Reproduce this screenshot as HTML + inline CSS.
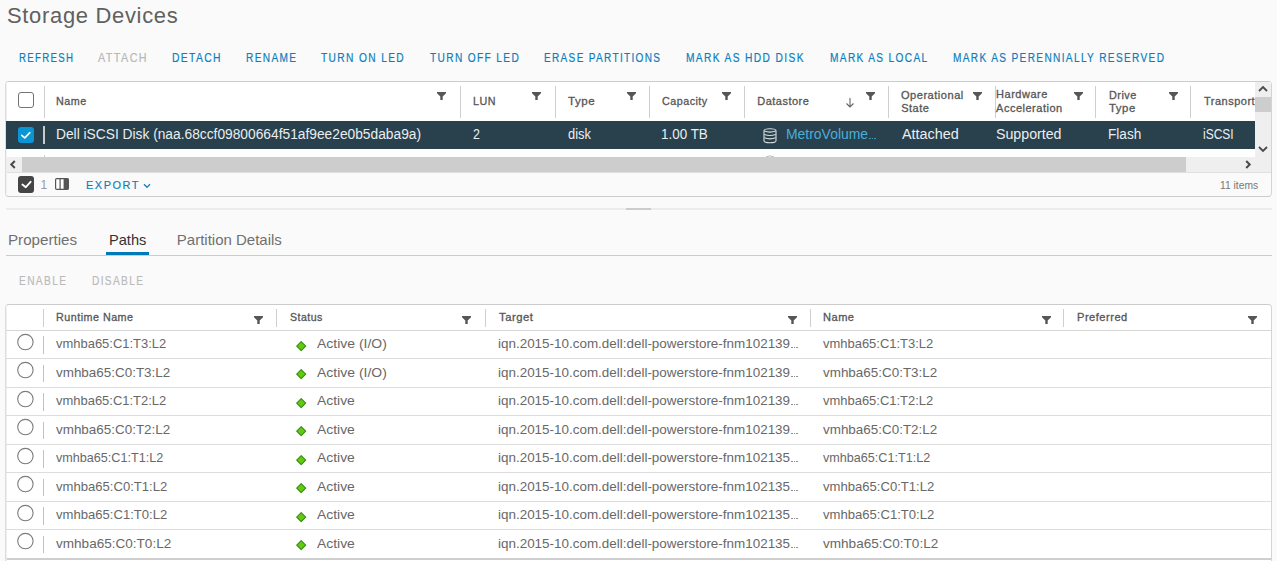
<!DOCTYPE html>
<html><head><meta charset="utf-8">
<style>
*{box-sizing:border-box;margin:0;padding:0}
html,body{width:1277px;height:561px;overflow:hidden;background:#fafafa;font-family:"Liberation Sans",sans-serif}
.a{position:absolute}
.t{position:absolute;white-space:nowrap;transform-origin:0 0;font-family:"Liberation Sans",sans-serif}
.clip{position:absolute;overflow:hidden}
svg{position:absolute;overflow:visible}
</style></head><body>
<div class="a" style="left:5px;top:81px;width:1267px;height:116px;border:1px solid #cccccc;border-left-color:#dcdcdc;border-right-color:#d4d4d4;border-radius:4px;background:#fafafa"></div>
<div class="a" style="left:6px;top:85px;width:1px;height:108px;background:#f0f0f0"></div>
<div class="a" style="left:7px;top:82px;width:1248px;height:39px;background:#fff"></div>
<div class="a" style="left:18px;top:92px;width:16px;height:16px;border:1.5px solid #737373;border-radius:3px;background:#fff"></div>
<div class="a" style="left:44px;top:86px;width:1px;height:32px;background:#cfcfcf"></div>
<div class="a" style="left:460px;top:86px;width:1px;height:32px;background:#cfcfcf"></div>
<div class="a" style="left:555px;top:86px;width:1px;height:32px;background:#cfcfcf"></div>
<div class="a" style="left:649px;top:86px;width:1px;height:32px;background:#cfcfcf"></div>
<div class="a" style="left:744px;top:86px;width:1px;height:32px;background:#cfcfcf"></div>
<div class="a" style="left:888px;top:86px;width:1px;height:32px;background:#cfcfcf"></div>
<div class="a" style="left:995px;top:86px;width:1px;height:32px;background:#cfcfcf"></div>
<div class="a" style="left:1095px;top:86px;width:1px;height:32px;background:#cfcfcf"></div>
<div class="a" style="left:1190px;top:86px;width:1px;height:32px;background:#cfcfcf"></div>
<svg style="left:437px;top:92px" width="9" height="8" viewBox="0 0 9 8"><path d="M0 0H9V1.3L5.7 4.4V8H3.3V4.4L0 1.3Z" fill="#565656"/></svg>
<svg style="left:532px;top:92px" width="9" height="8" viewBox="0 0 9 8"><path d="M0 0H9V1.3L5.7 4.4V8H3.3V4.4L0 1.3Z" fill="#565656"/></svg>
<svg style="left:627px;top:92px" width="9" height="8" viewBox="0 0 9 8"><path d="M0 0H9V1.3L5.7 4.4V8H3.3V4.4L0 1.3Z" fill="#565656"/></svg>
<svg style="left:722px;top:92px" width="9" height="8" viewBox="0 0 9 8"><path d="M0 0H9V1.3L5.7 4.4V8H3.3V4.4L0 1.3Z" fill="#565656"/></svg>
<svg style="left:866px;top:92px" width="9" height="8" viewBox="0 0 9 8"><path d="M0 0H9V1.3L5.7 4.4V8H3.3V4.4L0 1.3Z" fill="#565656"/></svg>
<svg style="left:973px;top:92px" width="9" height="8" viewBox="0 0 9 8"><path d="M0 0H9V1.3L5.7 4.4V8H3.3V4.4L0 1.3Z" fill="#565656"/></svg>
<svg style="left:1074px;top:92px" width="9" height="8" viewBox="0 0 9 8"><path d="M0 0H9V1.3L5.7 4.4V8H3.3V4.4L0 1.3Z" fill="#565656"/></svg>
<svg style="left:1169px;top:92px" width="9" height="8" viewBox="0 0 9 8"><path d="M0 0H9V1.3L5.7 4.4V8H3.3V4.4L0 1.3Z" fill="#565656"/></svg>
<svg style="left:845px;top:97px" width="10" height="11" viewBox="0 0 10 11"><path d="M5 1V10M1.5 6.5L5 10L8.5 6.5" stroke="#666" stroke-width="1.1" fill="none"/></svg>
<div class="a" style="left:6px;top:121px;width:1249px;height:28px;background:#29404d"></div>
<div class="a" style="left:18px;top:127px;width:16px;height:16px;background:#0a95d5;border-radius:3px"></div>
<svg style="left:18px;top:127px" width="16" height="16" viewBox="0 0 16 16"><path d="M3.7 8.3L6.8 10.9L11.8 5.6" stroke="#fff" stroke-width="1.6" fill="none" stroke-linecap="round" stroke-linejoin="round"/></svg>
<div class="a" style="left:43px;top:126px;width:2px;height:18px;background:#c8cccf"></div>
<svg style="left:763px;top:127.5px" width="14" height="16" viewBox="0 0 14 16"><g stroke="#d9dcde" stroke-width="1.1" fill="none"><path d="M1 2.8Q1 0.8 7 0.8Q13 0.8 13 2.8V12.8Q13 14.8 7 14.8Q1 14.8 1 12.8Z"/><path d="M1.3 3Q7 5.2 12.7 3M1.3 6.4Q7 8.6 12.7 6.4M1.3 9.8Q7 12 12.7 9.8"/></g></svg>
<div class="a" style="left:7px;top:149px;width:1248px;height:8px;background:#fff"></div>
<div class="a" style="left:44px;top:155px;width:1px;height:2px;background:#ccc"></div>
<svg style="left:765px;top:154px" width="10" height="3" viewBox="0 0 10 3"><path d="M1 3Q5 0.5 9 3" stroke="#bbb" stroke-width="1" fill="none"/></svg>
<div class="a" style="left:7px;top:157px;width:1264px;height:15px;background:#efefef"></div>
<div class="a" style="left:22px;top:157px;width:1164px;height:15px;background:#cdcdcd"></div>
<svg style="left:9px;top:160px" width="8" height="9" viewBox="0 0 8 9"><path d="M5.8 1L2.3 4.5L5.8 8" stroke="#4a4a4a" stroke-width="2" fill="none"/></svg>
<svg style="left:1244px;top:160px" width="8" height="9" viewBox="0 0 8 9"><path d="M2.2 1L5.7 4.5L2.2 8" stroke="#4a4a4a" stroke-width="2" fill="none"/></svg>
<div class="a" style="left:7px;top:172px;width:1264px;height:1px;background:#e0e0e0"></div>
<div class="a" style="left:1255px;top:82px;width:16px;height:75px;background:#efefef"></div>
<div class="a" style="left:1255px;top:97px;width:16px;height:15px;background:#cdcdcd"></div>
<svg style="left:1258px;top:85px" width="10" height="8" viewBox="0 0 10 8"><path d="M1 6L5 2L9 6" stroke="#4a4a4a" stroke-width="1.8" fill="none"/></svg>
<svg style="left:1258px;top:145px" width="10" height="8" viewBox="0 0 10 8"><path d="M1 2L5 6L9 2" stroke="#4a4a4a" stroke-width="1.8" fill="none"/></svg>
<div class="a" style="left:18px;top:176px;width:16px;height:17px;background:#454545;border-radius:3px"></div>
<svg style="left:18px;top:176.5px" width="16" height="16" viewBox="0 0 16 16"><path d="M4.4 7.6L7.8 10.2L12.6 4.8" stroke="#fff" stroke-width="1.9" fill="none" stroke-linecap="round" stroke-linejoin="round"/></svg>
<svg style="left:55px;top:178px" width="14" height="12" viewBox="0 0 14 12"><rect x="0.6" y="0.6" width="12.8" height="10.8" rx="1.2" fill="#fff" stroke="#555" stroke-width="1.2"/><rect x="4.5" y="0.6" width="1.2" height="10.8" fill="#555"/><rect x="8.6" y="0.6" width="4.8" height="10.8" fill="#555"/></svg>
<svg style="left:143px;top:183px" width="8" height="6" viewBox="0 0 8 6"><path d="M1 1.2L4 4.2L7 1.2" stroke="#1a84bf" stroke-width="1.4" fill="none"/></svg>
<div class="a" style="left:6px;top:208px;width:1266px;height:2px;background:#ececec"></div>
<div class="a" style="left:626px;top:208px;width:25px;height:2px;background:#cccccc"></div>
<div class="a" style="left:6px;top:255px;width:1266px;height:1px;background:#cccccc"></div>
<div class="a" style="left:106px;top:252px;width:43px;height:3px;background:#0079b8"></div>
<div class="a" style="left:5px;top:304px;width:1267px;height:300px;border:1px solid #cccccc;border-left-color:#dcdcdc;border-right-color:#d4d4d4;border-radius:4px;background:#fff"></div>
<div class="a" style="left:6px;top:308px;width:1px;height:260px;background:#f0f0f0"></div>
<div class="a" style="left:6px;top:330px;width:1265px;height:1px;background:#d7d7d7"></div>
<div class="a" style="left:43px;top:309px;width:1px;height:18px;background:#cfcfcf"></div>
<div class="a" style="left:276px;top:309px;width:1px;height:18px;background:#cfcfcf"></div>
<div class="a" style="left:485px;top:309px;width:1px;height:18px;background:#cfcfcf"></div>
<div class="a" style="left:810px;top:309px;width:1px;height:18px;background:#cfcfcf"></div>
<div class="a" style="left:1063px;top:309px;width:1px;height:18px;background:#cfcfcf"></div>
<svg style="left:254px;top:316px" width="9" height="8" viewBox="0 0 9 8"><path d="M0 0H9V1.3L5.7 4.4V8H3.3V4.4L0 1.3Z" fill="#565656"/></svg>
<svg style="left:462px;top:316px" width="9" height="8" viewBox="0 0 9 8"><path d="M0 0H9V1.3L5.7 4.4V8H3.3V4.4L0 1.3Z" fill="#565656"/></svg>
<svg style="left:788px;top:316px" width="9" height="8" viewBox="0 0 9 8"><path d="M0 0H9V1.3L5.7 4.4V8H3.3V4.4L0 1.3Z" fill="#565656"/></svg>
<svg style="left:1042px;top:316px" width="9" height="8" viewBox="0 0 9 8"><path d="M0 0H9V1.3L5.7 4.4V8H3.3V4.4L0 1.3Z" fill="#565656"/></svg>
<svg style="left:1248px;top:316px" width="9" height="8" viewBox="0 0 9 8"><path d="M0 0H9V1.3L5.7 4.4V8H3.3V4.4L0 1.3Z" fill="#565656"/></svg>
<div class="a" style="left:6px;top:358px;width:1265px;height:1px;background:#dddddd"></div>
<svg style="left:17px;top:333.5px" width="17" height="17" viewBox="0 0 17 17"><circle cx="8.4" cy="8.1" r="7.7" fill="#fff" stroke="#7c7c7c" stroke-width="1.1"/></svg>
<div class="a" style="left:43px;top:336.0px;width:1px;height:17.5px;background:#c2c2c2"></div>
<svg style="left:295.8px;top:340.6px" width="11" height="11" viewBox="0 0 11 11"><path d="M5.2 0.7L9.7 5.2L5.2 9.7L0.7 5.2Z" fill="#66c811" stroke="#2f8f10" stroke-width="1.1" stroke-linejoin="round"/></svg>
<div class="a" style="left:6px;top:387px;width:1265px;height:1px;background:#dddddd"></div>
<svg style="left:17px;top:362.0px" width="17" height="17" viewBox="0 0 17 17"><circle cx="8.4" cy="8.1" r="7.7" fill="#fff" stroke="#7c7c7c" stroke-width="1.1"/></svg>
<div class="a" style="left:43px;top:364.5px;width:1px;height:17.5px;background:#c2c2c2"></div>
<svg style="left:295.8px;top:369.1px" width="11" height="11" viewBox="0 0 11 11"><path d="M5.2 0.7L9.7 5.2L5.2 9.7L0.7 5.2Z" fill="#66c811" stroke="#2f8f10" stroke-width="1.1" stroke-linejoin="round"/></svg>
<div class="a" style="left:6px;top:415px;width:1265px;height:1px;background:#dddddd"></div>
<svg style="left:17px;top:390.5px" width="17" height="17" viewBox="0 0 17 17"><circle cx="8.4" cy="8.1" r="7.7" fill="#fff" stroke="#7c7c7c" stroke-width="1.1"/></svg>
<div class="a" style="left:43px;top:393.0px;width:1px;height:17.5px;background:#c2c2c2"></div>
<svg style="left:295.8px;top:397.6px" width="11" height="11" viewBox="0 0 11 11"><path d="M5.2 0.7L9.7 5.2L5.2 9.7L0.7 5.2Z" fill="#66c811" stroke="#2f8f10" stroke-width="1.1" stroke-linejoin="round"/></svg>
<div class="a" style="left:6px;top:444px;width:1265px;height:1px;background:#dddddd"></div>
<svg style="left:17px;top:419.0px" width="17" height="17" viewBox="0 0 17 17"><circle cx="8.4" cy="8.1" r="7.7" fill="#fff" stroke="#7c7c7c" stroke-width="1.1"/></svg>
<div class="a" style="left:43px;top:421.5px;width:1px;height:17.5px;background:#c2c2c2"></div>
<svg style="left:295.8px;top:426.1px" width="11" height="11" viewBox="0 0 11 11"><path d="M5.2 0.7L9.7 5.2L5.2 9.7L0.7 5.2Z" fill="#66c811" stroke="#2f8f10" stroke-width="1.1" stroke-linejoin="round"/></svg>
<div class="a" style="left:6px;top:472px;width:1265px;height:1px;background:#dddddd"></div>
<svg style="left:17px;top:447.5px" width="17" height="17" viewBox="0 0 17 17"><circle cx="8.4" cy="8.1" r="7.7" fill="#fff" stroke="#7c7c7c" stroke-width="1.1"/></svg>
<div class="a" style="left:43px;top:450.0px;width:1px;height:17.5px;background:#c2c2c2"></div>
<svg style="left:295.8px;top:454.6px" width="11" height="11" viewBox="0 0 11 11"><path d="M5.2 0.7L9.7 5.2L5.2 9.7L0.7 5.2Z" fill="#66c811" stroke="#2f8f10" stroke-width="1.1" stroke-linejoin="round"/></svg>
<div class="a" style="left:6px;top:501px;width:1265px;height:1px;background:#dddddd"></div>
<svg style="left:17px;top:476.0px" width="17" height="17" viewBox="0 0 17 17"><circle cx="8.4" cy="8.1" r="7.7" fill="#fff" stroke="#7c7c7c" stroke-width="1.1"/></svg>
<div class="a" style="left:43px;top:478.5px;width:1px;height:17.5px;background:#c2c2c2"></div>
<svg style="left:295.8px;top:483.1px" width="11" height="11" viewBox="0 0 11 11"><path d="M5.2 0.7L9.7 5.2L5.2 9.7L0.7 5.2Z" fill="#66c811" stroke="#2f8f10" stroke-width="1.1" stroke-linejoin="round"/></svg>
<div class="a" style="left:6px;top:529px;width:1265px;height:1px;background:#dddddd"></div>
<svg style="left:17px;top:504.5px" width="17" height="17" viewBox="0 0 17 17"><circle cx="8.4" cy="8.1" r="7.7" fill="#fff" stroke="#7c7c7c" stroke-width="1.1"/></svg>
<div class="a" style="left:43px;top:507.0px;width:1px;height:17.5px;background:#c2c2c2"></div>
<svg style="left:295.8px;top:511.6px" width="11" height="11" viewBox="0 0 11 11"><path d="M5.2 0.7L9.7 5.2L5.2 9.7L0.7 5.2Z" fill="#66c811" stroke="#2f8f10" stroke-width="1.1" stroke-linejoin="round"/></svg>
<div class="a" style="left:6px;top:558px;width:1265px;height:1px;background:#dddddd"></div>
<svg style="left:17px;top:533.0px" width="17" height="17" viewBox="0 0 17 17"><circle cx="8.4" cy="8.1" r="7.7" fill="#fff" stroke="#7c7c7c" stroke-width="1.1"/></svg>
<div class="a" style="left:43px;top:535.5px;width:1px;height:17.5px;background:#c2c2c2"></div>
<svg style="left:295.8px;top:540.1px" width="11" height="11" viewBox="0 0 11 11"><path d="M5.2 0.7L9.7 5.2L5.2 9.7L0.7 5.2Z" fill="#66c811" stroke="#2f8f10" stroke-width="1.1" stroke-linejoin="round"/></svg>
<div class="a" style="left:7px;top:558px;width:1264px;height:2px;background:#cfcfcf"></div>
<span class="t" style="left:7.1px;top:5px;font-size:22px;line-height:22px;color:#606060;letter-spacing:0.700px;transform:scaleX(0.9970);">Storage Devices</span>
<span class="t" style="left:19px;top:52px;font-size:12px;line-height:12px;color:#0a7fbd;-webkit-text-stroke:0.2px #0a7fbd;letter-spacing:1.600px;transform:scaleX(0.8073);">REFRESH</span>
<span class="t" style="left:98px;top:52px;font-size:12px;line-height:12px;color:#b8b8b8;-webkit-text-stroke:0.2px #b8b8b8;letter-spacing:1.600px;transform:scaleX(0.8963);">ATTACH</span>
<span class="t" style="left:172px;top:52px;font-size:12px;line-height:12px;color:#0a7fbd;-webkit-text-stroke:0.2px #0a7fbd;letter-spacing:1.600px;transform:scaleX(0.8605);">DETACH</span>
<span class="t" style="left:246px;top:52px;font-size:12px;line-height:12px;color:#0a7fbd;-webkit-text-stroke:0.2px #0a7fbd;letter-spacing:1.600px;transform:scaleX(0.8427);">RENAME</span>
<span class="t" style="left:321px;top:52px;font-size:12px;line-height:12px;color:#0a7fbd;-webkit-text-stroke:0.2px #0a7fbd;letter-spacing:1.600px;transform:scaleX(0.8498);">TURN ON LED</span>
<span class="t" style="left:430px;top:52px;font-size:12px;line-height:12px;color:#0a7fbd;-webkit-text-stroke:0.2px #0a7fbd;letter-spacing:1.600px;transform:scaleX(0.8455);">TURN OFF LED</span>
<span class="t" style="left:544px;top:52px;font-size:12px;line-height:12px;color:#0a7fbd;-webkit-text-stroke:0.2px #0a7fbd;letter-spacing:1.600px;transform:scaleX(0.8351);">ERASE PARTITIONS</span>
<span class="t" style="left:686px;top:52px;font-size:12px;line-height:12px;color:#0a7fbd;-webkit-text-stroke:0.2px #0a7fbd;letter-spacing:1.600px;transform:scaleX(0.8509);">MARK AS HDD DISK</span>
<span class="t" style="left:830px;top:52px;font-size:12px;line-height:12px;color:#0a7fbd;-webkit-text-stroke:0.2px #0a7fbd;letter-spacing:1.600px;transform:scaleX(0.8432);">MARK AS LOCAL</span>
<span class="t" style="left:953px;top:52px;font-size:12px;line-height:12px;color:#0a7fbd;-webkit-text-stroke:0.2px #0a7fbd;letter-spacing:1.600px;transform:scaleX(0.8419);">MARK AS PERENNIALLY RESERVED</span>
<span class="t" style="left:56.4px;top:96px;font-size:11px;line-height:11px;color:#565656;-webkit-text-stroke:0.3px #565656;letter-spacing:0.500px;transform:scaleX(0.9797);">Name</span>
<span class="t" style="left:472.5px;top:96px;font-size:11px;line-height:11px;color:#565656;-webkit-text-stroke:0.3px #565656;letter-spacing:0.500px;transform:scaleX(0.9757);">LUN</span>
<span class="t" style="left:567.6px;top:96px;font-size:11px;line-height:11px;color:#565656;-webkit-text-stroke:0.3px #565656;letter-spacing:0.500px;transform:scaleX(1.0543);">Type</span>
<span class="t" style="left:662.3px;top:96px;font-size:11px;line-height:11px;color:#565656;-webkit-text-stroke:0.3px #565656;letter-spacing:0.500px;transform:scaleX(0.9766);">Capacity</span>
<span class="t" style="left:757.2px;top:96px;font-size:11px;line-height:11px;color:#565656;-webkit-text-stroke:0.3px #565656;letter-spacing:0.500px;">Datastore</span>
<span class="t" style="left:901.2px;top:90px;font-size:11px;line-height:11px;color:#565656;-webkit-text-stroke:0.3px #565656;letter-spacing:0.500px;transform:scaleX(1.0061);">Operational</span>
<span class="t" style="left:901.2px;top:103px;font-size:11px;line-height:11px;color:#565656;-webkit-text-stroke:0.3px #565656;letter-spacing:0.500px;">State</span>
<span class="t" style="left:996.1px;top:89px;font-size:11px;line-height:11px;color:#565656;-webkit-text-stroke:0.3px #565656;letter-spacing:0.500px;">Hardware</span>
<span class="t" style="left:996.1px;top:103px;font-size:11px;line-height:11px;color:#565656;-webkit-text-stroke:0.3px #565656;letter-spacing:0.500px;">Acceleration</span>
<span class="t" style="left:1108.6px;top:90px;font-size:11px;line-height:11px;color:#565656;-webkit-text-stroke:0.3px #565656;letter-spacing:0.500px;transform:scaleX(0.9873);">Drive</span>
<span class="t" style="left:1108.6px;top:103px;font-size:11px;line-height:11px;color:#565656;-webkit-text-stroke:0.3px #565656;letter-spacing:0.500px;transform:scaleX(1.0345);">Type</span>
<div class="clip" style="left:1204px;top:93px;width:51px;height:19px"><span class="t" style="left:1204px;top:96px;font-size:11px;line-height:11px;color:#565656;-webkit-text-stroke:0.3px #565656;letter-spacing:0.500px;left:0;top:3px;">Transport</span></div>
<span class="t" style="left:55.62px;top:127px;font-size:14px;line-height:14px;color:#eaeef0;transform:scaleX(0.9832);">Dell iSCSI Disk (naa.68ccf09800664f51af9ee2e0b5daba9a)</span>
<span class="t" style="left:472.6px;top:127px;font-size:14px;line-height:14px;color:#eaeef0;transform:scaleX(0.8875);">2</span>
<span class="t" style="left:567.5px;top:127px;font-size:14px;line-height:14px;color:#eaeef0;transform:scaleX(0.9190);">disk</span>
<span class="t" style="left:661.24px;top:127px;font-size:14px;line-height:14px;color:#eaeef0;transform:scaleX(0.9604);">1.00 TB</span>
<span class="t" style="left:785.6px;top:127px;font-size:14px;line-height:14px;color:#49afd9;transform:scaleX(0.9951);">MetroVolume</span>
<span class="t" style="left:901.7px;top:127px;font-size:14px;line-height:14px;color:#eaeef0;transform:scaleX(1.0280);">Attached</span>
<span class="t" style="left:996.1px;top:127px;font-size:14px;line-height:14px;color:#eaeef0;transform:scaleX(1.0138);">Supported</span>
<span class="t" style="left:1107.53px;top:127px;font-size:14px;line-height:14px;color:#eaeef0;transform:scaleX(0.9708);">Flash</span>
<span class="t" style="left:1203.4px;top:127px;font-size:14px;line-height:14px;color:#eaeef0;transform:scaleX(0.8568);">iSCSI</span>
<span class="t" style="left:40.4px;top:179px;font-size:12px;line-height:12px;color:#9a9a9a;">1</span>
<span class="t" style="left:86.3px;top:179px;font-size:11.5px;line-height:12px;color:#0a7fbd;-webkit-text-stroke:0.15px #0a7fbd;letter-spacing:1.600px;transform:scaleX(0.9518);">EXPORT</span>
<span class="t" style="left:1219.9px;top:179px;font-size:11.5px;line-height:12px;color:#777777;transform:scaleX(0.8936);">11 items</span>
<span class="t" style="left:8.39px;top:232px;font-size:15px;line-height:15px;color:#707070;transform:scaleX(1.0110);">Properties</span>
<span class="t" style="left:108.73px;top:232px;font-size:15px;line-height:15px;color:#333333;transform:scaleX(0.9740);">Paths</span>
<span class="t" style="left:176.8px;top:232px;font-size:15px;line-height:15px;color:#707070;">Partition Details</span>
<span class="t" style="left:18.8px;top:275px;font-size:12px;line-height:12px;color:#bababa;-webkit-text-stroke:0.2px #bababa;letter-spacing:1.600px;transform:scaleX(0.8491);">ENABLE</span>
<span class="t" style="left:91.6px;top:275px;font-size:12px;line-height:12px;color:#bababa;-webkit-text-stroke:0.2px #bababa;letter-spacing:1.600px;transform:scaleX(0.8460);">DISABLE</span>
<span class="t" style="left:56.4px;top:312px;font-size:11px;line-height:11px;color:#565656;-webkit-text-stroke:0.3px #565656;letter-spacing:0.500px;transform:scaleX(0.9766);">Runtime Name</span>
<span class="t" style="left:289.5px;top:312px;font-size:11px;line-height:11px;color:#565656;-webkit-text-stroke:0.3px #565656;letter-spacing:0.500px;transform:scaleX(0.9595);">Status</span>
<span class="t" style="left:498.8px;top:312px;font-size:11px;line-height:11px;color:#565656;-webkit-text-stroke:0.3px #565656;letter-spacing:0.500px;transform:scaleX(1.0237);">Target</span>
<span class="t" style="left:823px;top:312px;font-size:11px;line-height:11px;color:#565656;-webkit-text-stroke:0.3px #565656;letter-spacing:0.500px;transform:scaleX(1.0057);">Name</span>
<span class="t" style="left:1076.9px;top:312px;font-size:11px;line-height:11px;color:#565656;-webkit-text-stroke:0.3px #565656;letter-spacing:0.500px;transform:scaleX(1.0073);">Preferred</span>
<span class="t" style="left:56.2px;top:337px;font-size:13px;line-height:13px;color:#686868;transform:scaleX(0.9970);">vmhba65:C1:T3:L2</span>
<span class="t" style="left:317.2px;top:337px;font-size:13px;line-height:13px;color:#686868;transform:scaleX(1.0746);">Active (I/O)</span>
<span class="t" style="left:498px;top:337px;font-size:13px;line-height:13px;color:#686868;transform:scaleX(1.0336);">iqn.2015-10.com.dell:dell-powerstore-fnm102139</span>
<span class="t" style="left:823px;top:337px;font-size:13px;line-height:13px;color:#686868;transform:scaleX(0.9970);">vmhba65:C1:T3:L2</span>
<span class="t" style="left:56.2px;top:366px;font-size:13px;line-height:13px;color:#686868;transform:scaleX(1.0332);">vmhba65:C0:T3:L2</span>
<span class="t" style="left:317.2px;top:366px;font-size:13px;line-height:13px;color:#686868;transform:scaleX(1.0746);">Active (I/O)</span>
<span class="t" style="left:498px;top:366px;font-size:13px;line-height:13px;color:#686868;transform:scaleX(1.0336);">iqn.2015-10.com.dell:dell-powerstore-fnm102139</span>
<span class="t" style="left:823px;top:366px;font-size:13px;line-height:13px;color:#686868;transform:scaleX(1.0332);">vmhba65:C0:T3:L2</span>
<span class="t" style="left:56.2px;top:394px;font-size:13px;line-height:13px;color:#686868;transform:scaleX(0.9970);">vmhba65:C1:T2:L2</span>
<span class="t" style="left:317.2px;top:394px;font-size:13px;line-height:13px;color:#686868;transform:scaleX(1.0691);">Active</span>
<span class="t" style="left:498px;top:394px;font-size:13px;line-height:13px;color:#686868;transform:scaleX(1.0336);">iqn.2015-10.com.dell:dell-powerstore-fnm102139</span>
<span class="t" style="left:823px;top:394px;font-size:13px;line-height:13px;color:#686868;transform:scaleX(0.9970);">vmhba65:C1:T2:L2</span>
<span class="t" style="left:56.2px;top:423px;font-size:13px;line-height:13px;color:#686868;transform:scaleX(1.0332);">vmhba65:C0:T2:L2</span>
<span class="t" style="left:317.2px;top:423px;font-size:13px;line-height:13px;color:#686868;transform:scaleX(1.0691);">Active</span>
<span class="t" style="left:498px;top:423px;font-size:13px;line-height:13px;color:#686868;transform:scaleX(1.0336);">iqn.2015-10.com.dell:dell-powerstore-fnm102139</span>
<span class="t" style="left:823px;top:423px;font-size:13px;line-height:13px;color:#686868;transform:scaleX(1.0332);">vmhba65:C0:T2:L2</span>
<span class="t" style="left:56.2px;top:451px;font-size:13px;line-height:13px;color:#686868;transform:scaleX(0.9698);">vmhba65:C1:T1:L2</span>
<span class="t" style="left:317.2px;top:451px;font-size:13px;line-height:13px;color:#686868;transform:scaleX(1.0691);">Active</span>
<span class="t" style="left:498px;top:451px;font-size:13px;line-height:13px;color:#686868;transform:scaleX(1.0336);">iqn.2015-10.com.dell:dell-powerstore-fnm102135</span>
<span class="t" style="left:823px;top:451px;font-size:13px;line-height:13px;color:#686868;transform:scaleX(0.9698);">vmhba65:C1:T1:L2</span>
<span class="t" style="left:56.2px;top:480px;font-size:13px;line-height:13px;color:#686868;transform:scaleX(1.0060);">vmhba65:C0:T1:L2</span>
<span class="t" style="left:317.2px;top:480px;font-size:13px;line-height:13px;color:#686868;transform:scaleX(1.0691);">Active</span>
<span class="t" style="left:498px;top:480px;font-size:13px;line-height:13px;color:#686868;transform:scaleX(1.0336);">iqn.2015-10.com.dell:dell-powerstore-fnm102135</span>
<span class="t" style="left:823px;top:480px;font-size:13px;line-height:13px;color:#686868;transform:scaleX(1.0060);">vmhba65:C0:T1:L2</span>
<span class="t" style="left:56.2px;top:508px;font-size:13px;line-height:13px;color:#686868;transform:scaleX(1.0060);">vmhba65:C1:T0:L2</span>
<span class="t" style="left:317.2px;top:508px;font-size:13px;line-height:13px;color:#686868;transform:scaleX(1.0691);">Active</span>
<span class="t" style="left:498px;top:508px;font-size:13px;line-height:13px;color:#686868;transform:scaleX(1.0336);">iqn.2015-10.com.dell:dell-powerstore-fnm102135</span>
<span class="t" style="left:823px;top:508px;font-size:13px;line-height:13px;color:#686868;transform:scaleX(1.0060);">vmhba65:C1:T0:L2</span>
<span class="t" style="left:56.2px;top:537px;font-size:13px;line-height:13px;color:#686868;transform:scaleX(1.0423);">vmhba65:C0:T0:L2</span>
<span class="t" style="left:317.2px;top:537px;font-size:13px;line-height:13px;color:#686868;transform:scaleX(1.0691);">Active</span>
<span class="t" style="left:498px;top:537px;font-size:13px;line-height:13px;color:#686868;transform:scaleX(1.0336);">iqn.2015-10.com.dell:dell-powerstore-fnm102135</span>
<span class="t" style="left:823px;top:537px;font-size:13px;line-height:13px;color:#686868;transform:scaleX(1.0423);">vmhba65:C0:T0:L2</span>
<div class="a" style="left:869.0px;top:137.5px;width:1.5px;height:1.5px;background:#49afd9;opacity:.75"></div>
<div class="a" style="left:871.6px;top:137.5px;width:1.5px;height:1.5px;background:#49afd9;opacity:.75"></div>
<div class="a" style="left:874.2px;top:137.5px;width:1.5px;height:1.5px;background:#49afd9;opacity:.75"></div>
<div class="a" style="left:791.0px;top:346.5px;width:1.5px;height:1.5px;background:#686868;opacity:.75"></div>
<div class="a" style="left:793.6px;top:346.5px;width:1.5px;height:1.5px;background:#686868;opacity:.75"></div>
<div class="a" style="left:796.2px;top:346.5px;width:1.5px;height:1.5px;background:#686868;opacity:.75"></div>
<div class="a" style="left:791.0px;top:375.5px;width:1.5px;height:1.5px;background:#686868;opacity:.75"></div>
<div class="a" style="left:793.6px;top:375.5px;width:1.5px;height:1.5px;background:#686868;opacity:.75"></div>
<div class="a" style="left:796.2px;top:375.5px;width:1.5px;height:1.5px;background:#686868;opacity:.75"></div>
<div class="a" style="left:791.0px;top:403.5px;width:1.5px;height:1.5px;background:#686868;opacity:.75"></div>
<div class="a" style="left:793.6px;top:403.5px;width:1.5px;height:1.5px;background:#686868;opacity:.75"></div>
<div class="a" style="left:796.2px;top:403.5px;width:1.5px;height:1.5px;background:#686868;opacity:.75"></div>
<div class="a" style="left:791.0px;top:432.5px;width:1.5px;height:1.5px;background:#686868;opacity:.75"></div>
<div class="a" style="left:793.6px;top:432.5px;width:1.5px;height:1.5px;background:#686868;opacity:.75"></div>
<div class="a" style="left:796.2px;top:432.5px;width:1.5px;height:1.5px;background:#686868;opacity:.75"></div>
<div class="a" style="left:791.0px;top:460.5px;width:1.5px;height:1.5px;background:#686868;opacity:.75"></div>
<div class="a" style="left:793.6px;top:460.5px;width:1.5px;height:1.5px;background:#686868;opacity:.75"></div>
<div class="a" style="left:796.2px;top:460.5px;width:1.5px;height:1.5px;background:#686868;opacity:.75"></div>
<div class="a" style="left:791.0px;top:489.5px;width:1.5px;height:1.5px;background:#686868;opacity:.75"></div>
<div class="a" style="left:793.6px;top:489.5px;width:1.5px;height:1.5px;background:#686868;opacity:.75"></div>
<div class="a" style="left:796.2px;top:489.5px;width:1.5px;height:1.5px;background:#686868;opacity:.75"></div>
<div class="a" style="left:791.0px;top:517.5px;width:1.5px;height:1.5px;background:#686868;opacity:.75"></div>
<div class="a" style="left:793.6px;top:517.5px;width:1.5px;height:1.5px;background:#686868;opacity:.75"></div>
<div class="a" style="left:796.2px;top:517.5px;width:1.5px;height:1.5px;background:#686868;opacity:.75"></div>
<div class="a" style="left:791.0px;top:546.5px;width:1.5px;height:1.5px;background:#686868;opacity:.75"></div>
<div class="a" style="left:793.6px;top:546.5px;width:1.5px;height:1.5px;background:#686868;opacity:.75"></div>
<div class="a" style="left:796.2px;top:546.5px;width:1.5px;height:1.5px;background:#686868;opacity:.75"></div>
</body></html>
